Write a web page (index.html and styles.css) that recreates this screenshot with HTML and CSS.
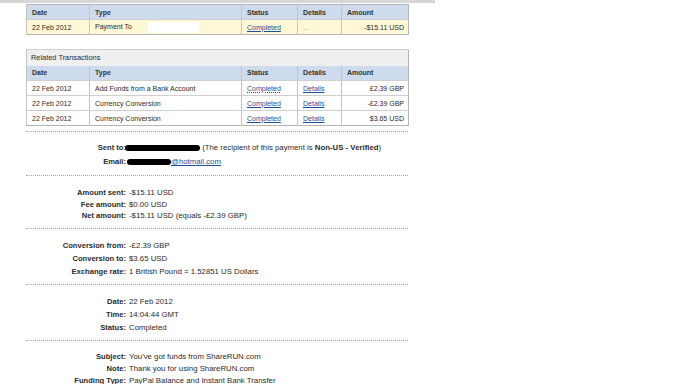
FILE: index.html
```html
<!DOCTYPE html>
<html lang="en">
<head>
  <meta charset="UTF-8" />
  <title>Transaction Details</title>
  <link rel="stylesheet" href="styles.css">
</head>
<body>
<div class="top-bar"></div>
<div class="page">
  <table class="txn">
    <colgroup>
      <col class="c-date"><col class="c-type"><col class="c-status"><col class="c-details"><col class="c-amount">
    </colgroup>
    <tr class="txn-head">
      <th>Date</th>
      <th>Type</th>
      <th>Status</th>
      <th>Details</th>
      <th>Amount</th>
    </tr>
    <tr class="txn-main">
      <td>22 Feb 2012</td>
      <td>Payment To<span class="mask-white"></span></td>
      <td><a href="#">Completed</a></td>
      <td class="muted">...</td>
      <td class="amt">-$15.11 USD</td>
    </tr>
  </table>

  <table class="txn related">
    <colgroup>
      <col class="c-date"><col class="c-type"><col class="c-status"><col class="c-details"><col class="c-amount">
    </colgroup>
    <tr class="txn-caption">
      <td colspan="5">Related Transactions</td>
    </tr>
    <tr class="txn-head">
      <th>Date</th>
      <th>Type</th>
      <th>Status</th>
      <th>Details</th>
      <th>Amount</th>
    </tr>
    <tr>
      <td>22 Feb 2012</td>
      <td>Add Funds from a Bank Account</td>
      <td><a href="#" class="hover">Completed</a></td>
      <td><a href="#">Details</a></td>
      <td class="amt">£2.39 GBP</td>
    </tr>
    <tr>
      <td>22 Feb 2012</td>
      <td>Currency Conversion</td>
      <td><a href="#">Completed</a></td>
      <td><a href="#">Details</a></td>
      <td class="amt">-£2.39 GBP</td>
    </tr>
    <tr>
      <td>22 Feb 2012</td>
      <td>Currency Conversion</td>
      <td><a href="#">Completed</a></td>
      <td><a href="#">Details</a></td>
      <td class="amt">$3.65 USD</td>
    </tr>
  </table>

  <div class="details details--sent">
    <div class="label">Sent to:</div>
    <div class="value"><span class="mask mask-name"></span> (The recipient of this payment is <b>Non-US - Verified</b>)</div>
    <div class="label">Email:</div>
    <div class="value"><span class="mask mask-mail"></span><a href="#">@hotmail.com</a></div>
  </div>

  <div class="details details--amounts">
    <div class="label">Amount sent:</div>
    <div class="value">-$15.11 USD</div>
    <div class="label">Fee amount:</div>
    <div class="value">$0.00 USD</div>
    <div class="label">Net amount:</div>
    <div class="value">-$15.11 USD (equals -£2.39 GBP)</div>
  </div>

  <div class="details">
    <div class="label">Conversion from:</div>
    <div class="value">-£2.39 GBP</div>
    <div class="label">Conversion to:</div>
    <div class="value">$3.65 USD</div>
    <div class="label">Exchange rate:</div>
    <div class="value">1 British Pound = 1.52851 US Dollars</div>
  </div>

  <div class="details">
    <div class="label">Date:</div>
    <div class="value">22 Feb 2012</div>
    <div class="label">Time:</div>
    <div class="value">14:04:44 GMT</div>
    <div class="label">Status:</div>
    <div class="value">Completed</div>
  </div>

  <div class="details details--note">
    <div class="label">Subject:</div>
    <div class="value">You've got funds from ShareRUN.com</div>
    <div class="label">Note:</div>
    <div class="value">Thank you for using ShareRUN.com</div>
    <div class="label">Funding Type:</div>
    <div class="value">PayPal Balance and Instant Bank Transfer</div>
  </div>
</div>
</body>
</html>
```

FILE: styles.css
```css
body {
  margin: 0;
  padding: 0;
  background: #fff;
  color: #2b2b2b;
  font-family: "Liberation Sans", Arial, sans-serif;
}
.top-bar {
  width: 435px;
  height: 3px;
  background: #d6d6d6;
}
.page {
  width: 382px;
  margin: 1px 0 0 26px;
}
a {
  color: #1f4f96;
}
.txn {
  width: 382px;
  table-layout: fixed;
  border-collapse: collapse;
  border: 1px solid #b4b4b4;
  font-size: 7px;
}
.txn th,
.txn td {
  box-sizing: border-box;
  height: 15px;
  padding: 0 4px 0 5px;
  border-left: 1px solid #c4c4c4;
  text-align: left;
  white-space: nowrap;
  overflow: hidden;
}
.txn td {
  border-top: 1px solid #cfcfcf;
}
.txn-head th {
  background: #cddbec;
  font-weight: bold;
  color: #333;
}
.txn-main td {
  background: #fff8d4;
}
.c-date { width: 63px; }
.c-type { width: 152px; }
.c-status { width: 56px; }
.c-details { width: 44px; }
.c-amount { width: 67px; }
.txn .amt {
  text-align: right;
}
.muted {
  color: #999;
}
.mask-white {
  display: inline-block;
  width: 51px;
  height: 11px;
  margin-left: 16px;
  vertical-align: middle;
  background: #fff;
}
.related {
  margin-top: 14px;
}
.txn-caption td {
  background: #efefef;
  font-size: 7.4px;
  padding-left: 4px;
  height: 16px;
}
.related a.hover {
  text-decoration-style: dotted;
}

.details {
  display: grid;
  grid-template-columns: 100px 1fr;
  column-gap: 3px;
  margin-top: 5px;
  padding: 10px 0 6px;
  border-top: 1px dotted #a8a8a8;
  font-size: 7.8px;
  line-height: 13px;
}
.details + .details {
  margin-top: 0;
}
.details--sent {
  line-height: 14px;
  padding-top: 9px;
}
.details--amounts {
  line-height: 11.5px;
  padding-top: 11px;
}
.details--note {
  line-height: 12px;
  padding-top: 10px;
}
.label {
  text-align: right;
  font-weight: bold;
  font-size: 7.6px;
}
.value {
  white-space: nowrap;
}
.mask {
  display: inline-block;
  height: 6px;
  background: #000;
  border-radius: 3px;
  vertical-align: middle;
}
.mask-name {
  width: 75px;
  margin-left: -4px;
}
.mask-mail {
  width: 44px;
  margin-left: -2px;
}
```
